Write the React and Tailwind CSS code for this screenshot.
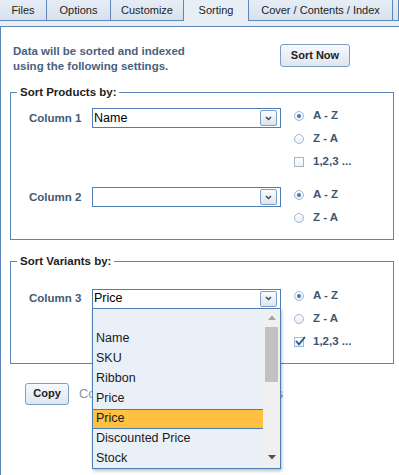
import React from "react";

const Radio = ({ checked }) => (
  <span className="w-[10px] h-[10px] rounded-full border border-[#a3b7cc] bg-gradient-to-b from-white to-[#e9eef4] flex items-center justify-center shrink-0">
    {checked && <span className="w-[4px] h-[4px] rounded-full bg-[#3b7bc2]" />}
  </span>
);

const Check = ({ checked }) => (
  <span className="relative w-[10px] h-[10px] border border-[#a3b7cc] bg-gradient-to-b from-white to-[#eef2f6] shrink-0">
    {checked && (
      <svg className="absolute -top-[3px] -left-[1px]" width="13" height="12" viewBox="0 0 13 12">
        <path d="M2 6 L5 9.3 L11 2" stroke="#1f5596" strokeWidth="1.8" fill="none" />
      </svg>
    )}
  </span>
);

const Opt = ({ kind = "radio", checked, label }) => (
  <div className="h-[23px] flex items-center gap-[9px]">
    {kind === "radio" ? <Radio checked={checked} /> : <Check checked={checked} />}
    <span className="text-[11.5px] font-bold text-[#3d5670] leading-none">{label}</span>
  </div>
);

const Chevron = () => (
  <span className="w-[17px] h-[16px] border border-[#7f9ec1] rounded-[2px] bg-gradient-to-b from-[#fbfcfe] to-[#dce5ef] flex items-center justify-center">
    <svg width="7" height="5" viewBox="0 0 7 5">
      <path d="M1 1 L3.5 3.5 L6 1" stroke="#4a4a4a" strokeWidth="1.5" fill="none" />
    </svg>
  </span>
);

const items = ["", "Name", "SKU", "Ribbon", "Price", "Price", "Discounted Price", "Stock"];

const Select = ({ value, open }) => (
  <div className="relative mt-[4px] w-[189px] h-[20px] border border-[#4d7db3] bg-white flex items-center pl-[1px] pr-[3px]">
    <span className="flex-1 text-[12.5px] text-black leading-none">{value}</span>
    <Chevron />
    {open && (
      <div className="absolute top-full left-[-1px] w-[189px] h-[161px] border border-[#4d7db3] bg-[#eaf0f8] flex z-10 shadow-[1px_2px_3px_rgba(0,0,0,0.25)] overflow-hidden">
        <div className="flex-1 flex flex-col">
          {items.map((it, i) =>
            i === 5 ? (
              <div key={i} className="h-[20px] shrink-0 flex items-center pl-[3px] bg-[#ffc13f] border-y border-[#4a7db5] text-[12.5px] text-[#1a1a1a]">
                {it}
              </div>
            ) : (
              <div key={i} className="h-[20px] shrink-0 flex items-center pl-[3px] text-[12.5px] text-[#1a1a1a]">
                {it}
              </div>
            )
          )}
        </div>
        <div className="w-[17px] bg-[#f0f0f0] flex flex-col items-stretch">
          <div className="h-[18px] flex items-center justify-center">
            <svg width="8" height="5" viewBox="0 0 8 5"><path d="M0 5 L4 0.5 L8 5 Z" fill="#a3a3a3" /></svg>
          </div>
          <div className="h-[55px] mx-[2px] bg-[#c1c1c1]" />
          <div className="flex-1" />
          <div className="h-[20px] flex items-center justify-center">
            <svg width="8" height="5" viewBox="0 0 8 5"><path d="M0 0 L8 0 L4 4.5 Z" fill="#505050" /></svg>
          </div>
        </div>
      </div>
    )}
  </div>
);

const Row = ({ label, value, open, children }) => (
  <div className="flex items-start">
    <div className="ml-[12px] w-[63px] mt-[4px] h-[20px] flex items-center text-[11.5px] font-bold text-[#3f5a76]">
      {label}
    </div>
    <Select value={value} open={open} />
    <div className="ml-[13px] flex flex-col">{children}</div>
  </div>
);

const Tab = ({ label, w, active }) => (
  <div
    className={
      active
        ? "h-[21px] border-r border-[#5b86b5] bg-[#e7eef6] flex items-center justify-center text-[11px] text-[#222]"
        : "h-[21px] border-r border-b border-[#5b86b5] bg-gradient-to-b from-[#e6edf5] to-[#d7e2ee] flex items-center justify-center text-[11px] text-[#222]"
    }
    style={{ width: w }}
  >
    {label}
  </div>
);

export default function App() {
  return (
    <div className="w-[399px] h-[475px] overflow-hidden bg-white relative font-['Liberation_Sans',Arial,sans-serif]">
      <div className="flex">
        <Tab label="Files" w={47} />
        <Tab label="Options" w={64} />
        <Tab label="Customize" w={73} />
        <Tab label="Sorting" w={65} active />
        <Tab label="Cover / Contents / Index" w={144} />
        <Tab label="" w={6} />
      </div>
      <div className="h-[6px] bg-[#e7eef6] border-b border-[#5b86b5]" />
      <div className="h-[448px] border-l border-[#5b86b5] pl-[9px] pt-[15px]">
        <div className="flex items-start">
          <div className="w-[270px] pl-[3px] pt-[2px] text-[11.5px] font-bold leading-[15px] text-[#47627d]">
            Data will be sorted and indexed
            <br />
            using the following settings.
          </div>
          <button className="mt-[2px] w-[70px] h-[23px] border border-[#7e9dc0] rounded-[3px] bg-gradient-to-b from-[#f8fafc] to-[#dde6f0] text-[11px] font-bold text-[#222]">
            Sort Now
          </button>
        </div>

        <fieldset className="mt-[10px] w-[384px] border border-[#5b86b5] px-[6px] pt-[3px] pb-[10px]">
          <legend className="px-[3px] text-[11.5px] font-bold text-[#222]">Sort Products by:</legend>
          <Row label="Column 1" value="Name">
            <Opt checked label="A - Z" />
            <Opt label="Z - A" />
            <Opt kind="check" label="1,2,3 ..." />
          </Row>
          <div className="h-[10px]" />
          <Row label="Column 2" value="">
            <Opt checked label="A - Z" />
            <Opt label="Z - A" />
          </Row>
        </fieldset>

        <fieldset className="mt-[13px] w-[384px] border border-[#5b86b5] px-[6px] pt-[14px] pb-[9px]">
          <legend className="px-[3px] text-[11.5px] font-bold text-[#222]">Sort Variants by:</legend>
          <Row label="Column 3" value="Price" open>
            <Opt checked label="A - Z" />
            <Opt label="Z - A" />
            <Opt kind="check" checked label="1,2,3 ..." />
          </Row>
        </fieldset>

        <div className="mt-[19px] ml-[15px] flex items-center gap-[10px]">
          <button className="w-[44px] h-[22px] border border-[#7e9dc0] rounded-[3px] bg-gradient-to-b from-[#f8fafc] to-[#dde6f0] text-[11px] font-bold text-[#222]">
            Copy
          </button>
          <span className="text-[12.8px] text-[#8595a6] whitespace-nowrap">Copy sort settings to all subsections</span>
        </div>
      </div>
    </div>
  );
}
